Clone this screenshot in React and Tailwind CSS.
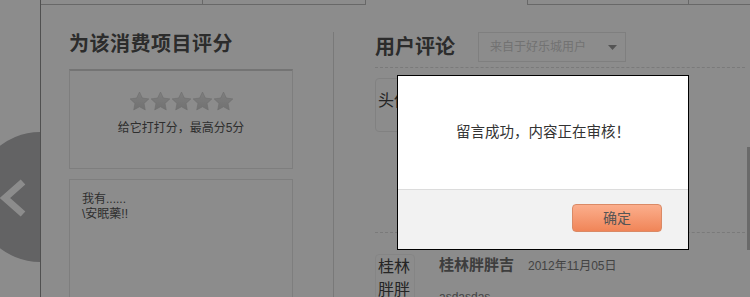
import React from 'react';

const cjk = "font-['Liberation_Sans','Noto_Sans_CJK_SC',sans-serif]";

function Star() {
  return (
    <svg width="21" height="21" viewBox="0 0 20 20">
      <defs>
        <linearGradient id="starFill" x1="0" y1="0" x2="0" y2="1">
          <stop offset="0" stopColor="#e6e6e6" />
          <stop offset="1" stopColor="#cfcfcf" />
        </linearGradient>
      </defs>
      <path
        d="M10 1l2.7 5.7 6.2.8-4.6 4.3 1.2 6.2L10 15 4.5 18l1.2-6.2L1.1 7.5l6.2-.8z"
        fill="url(#starFill)"
        stroke="#c8c8c8"
        strokeWidth="0.6"
      />
    </svg>
  );
}

export default function App() {
  return (
    <div className={`relative w-[750px] h-[297px] overflow-hidden bg-white ${cjk}`}>
      {/* carousel arrow peeking from behind the panel */}
      <div className="absolute left-[-25px] top-[132px] w-[130px] h-[130px] rounded-full bg-[#b4b4b6]" />
      <svg className="absolute left-0 top-[178px]" width="26" height="40" viewBox="0 0 26 40">
        <path d="M23 4L5 20l18 16" fill="none" stroke="#ffffff" strokeWidth="7" />
      </svg>

      <div className="flex h-full">
        <div className="w-[40px] shrink-0" />

        {/* main panel */}
        <div className="relative flex-1 flex flex-col bg-white border-l border-[#939393]">
          <div className="flex h-[5px] shrink-0">
            <div className="w-[162px] border-b border-r border-[#bdbdbd]" />
            <div className="w-[163px] border-b border-r border-[#bdbdbd]" />
            <div className="w-[161px]" />
            <div className="w-[162px] border-b border-l border-r border-[#bdbdbd]" />
            <div className="flex-1 border-b border-[#bdbdbd]" />
          </div>

          <div className="flex flex-1 mt-[27px]">
            {/* rating column */}
            <div className="w-[293px] shrink-0 pl-[28px] border-r border-[#dcdcdc]">
              <h2 className="text-[20px] leading-[24px] font-bold text-[#505050] tracking-[0.5px]">
                为该消费项目评分
              </h2>
              <div className="w-[224px] h-[100px] mt-[13px] border border-[#e6e6e6] border-t-2 border-t-[#d4d4d4] flex flex-col items-center pt-[20px]">
                <div className="flex">
                  <Star />
                  <Star />
                  <Star />
                  <Star />
                  <Star />
                </div>
                <p className="mt-[8px] text-[12px] leading-[16px] text-[#555]">给它打打分，最高分5分</p>
              </div>
              <div className="w-[224px] h-[140px] mt-[10px] border border-[#e6e6e6] pl-[12px] pt-[12px] text-[12px] leading-[15px] text-[#555]">
                <p>我有......</p>
                <p>\安眠藥!!</p>
              </div>
            </div>

            {/* comments column */}
            <div className="flex-1 pl-[41px] pr-[5px]">
              <div className="flex items-center h-[30px]">
                <h2 className="text-[20px] leading-[30px] font-bold text-[#505050]">用户评论</h2>
                <div className="ml-[23px] w-[148px] h-[30px] border border-[#e8e8e8] flex items-center justify-between pl-[11px] pr-[8px]">
                  <span className="text-[12px] text-[#d0d0d0]">来自于好乐城用户</span>
                  <svg width="9" height="5" viewBox="0 0 9 5">
                    <path d="M0 0h9L4.5 5z" fill="#9a9a9a" />
                  </svg>
                </div>
              </div>
              <div className="mt-[5px] border-b border-dashed border-[#dedede]" />

              <div className="h-[164px] pt-[10px]">
                <div className="w-[62px] h-[54px] rounded-[4px] border border-[#ececec] pl-[2px] pt-[12px] text-[16px] leading-[20px] text-[#444]">
                  头像
                </div>
              </div>
              <div className="border-b border-dashed border-[#dedede]" />

              <div className="flex mt-[21px]">
                <div className="w-[40px] h-[50px] rounded-[4px] border border-[#f2f2f2] pl-[2px] text-[16px] leading-[23px] text-[#444] break-all">
                  桂林胖胖
                </div>
                <div className="ml-[24px] pt-[1px]">
                  <div className="flex items-baseline gap-[14px]">
                    <span className="text-[15px] leading-[20px] font-bold text-[#707070]">桂林胖胖吉</span>
                    <span className="text-[12px] text-[#7a7a7a]">2012年11月05日</span>
                  </div>
                  <p className="mt-[13px] text-[12px] text-[#7a7a7a]">asdasdas</p>
                </div>
              </div>
            </div>
          </div>
        </div>
      </div>

      {/* scrollbar thumb */}
      <div className="absolute right-0 top-[147px] w-[3px] h-[103px] bg-[#c2c2c2]" />

      {/* dim overlay */}
      <div className="absolute inset-0 bg-black/45" />

      {/* dialog */}
      <div className="absolute left-[397px] top-[75px] w-[292px] h-[175px] bg-white border border-black flex flex-col">
        <div className="h-[113px] flex items-center justify-center">
          <p className="text-[14.5px] text-[#333]">留言成功，内容正在审核！</p>
        </div>
        <div className="flex-1 bg-[#f2f2f2] border-t border-[#dcdcdc] flex justify-end pr-[26px] pt-[14px]">
          <button
            type="button"
            className="w-[90px] h-[28px] rounded-[4px] border border-[#da8a66] bg-gradient-to-b from-[#fbae8c] to-[#f08558] text-[14px] text-[#555]"
          >
            确定
          </button>
        </div>
      </div>
    </div>
  );
}
